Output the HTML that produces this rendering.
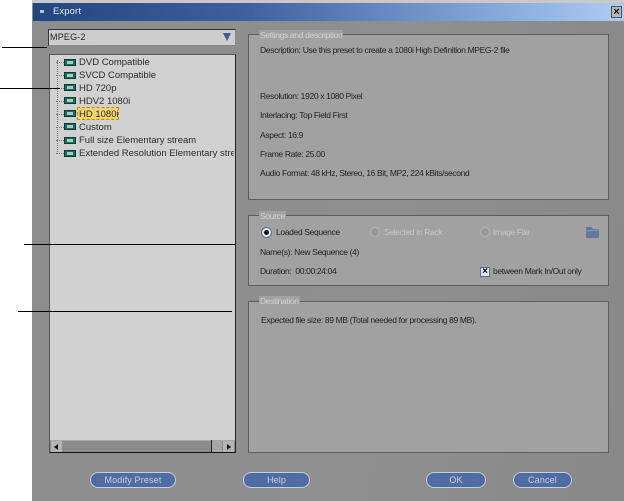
<!DOCTYPE html>
<html><head><meta charset="utf-8">
<style>
html,body{margin:0;padding:0;background:#fff;}
#r{position:relative;width:624px;height:501px;overflow:hidden;background:#fff;font-family:"Liberation Sans",sans-serif;font-size:8.5px;color:#222;filter:blur(.25px);}
#r div,#r span.a{position:absolute;white-space:nowrap;box-sizing:border-box;}
.t{line-height:11px;height:11px;letter-spacing:-.35px;}
.g{border:1px solid #5e5e5e;background:#a1a1a1;}
.lg{color:#d2d2d2;background:#a1a1a1;padding:0 1px;line-height:10px;height:10px;letter-spacing:-.35px;}
.b{background:#4f6ca3;border:1px solid #c3cfe3;border-radius:8px;color:#c6d0e2;text-align:center;line-height:14px;height:16px;font-size:9px;letter-spacing:.15px;top:472px;}
.l{background:#000;height:1px;}
.i{font-size:9.5px;color:#2a2a2a;left:79px;line-height:12px;height:12px;}
.f{left:64px;width:12px;height:7px;background:#1f6a60;border:1px solid #0e3a36;}
.f:after{content:"";position:absolute;left:2px;top:1px;width:6px;height:3px;background:#9fd0c4;}
.h{left:56px;width:8px;height:0;border-top:1px dotted #777;}
</style></head><body>
<div id="r">
<div style="left:32px;top:0;width:592px;height:501px;background:linear-gradient(100deg,#8d8d8d,#8f8f8f 60%,#888);"></div>
<div style="left:32px;top:0;width:592px;height:3px;background:#c9c9c9;"></div>
<div style="left:33px;top:3px;width:591px;height:18px;background:linear-gradient(90deg,#23467f,#3d5f9c 35%,#779bd0 70%,#acccf2);"></div>
<div style="left:40px;top:10px;width:4px;height:3px;background:#b9c4d8;"></div>
<div class="t" style="left:53px;top:6px;color:#e4e9f2;font-size:9.5px;letter-spacing:.1px;">Export</div>
<div style="left:611px;top:6px;width:11px;height:12px;background:#b5b5b5;border:1px solid #555;color:#000;font-weight:bold;font-size:11px;line-height:10px;text-align:center;">×</div>

<div style="left:48px;top:29px;width:188px;height:17px;background:#cdcdcd;border:1px solid #333;border-right-color:#888;border-bottom-color:#888;"></div>
<div class="t" style="left:50px;top:32px;font-size:9px;letter-spacing:.2px;">MPEG-2</div>
<div style="left:223px;top:33px;width:0;height:0;border-left:4px solid transparent;border-right:4px solid transparent;border-top:8px solid #47598a;"></div>

<div style="left:49px;top:54px;width:187px;height:399px;background:#d1d1d1;border:1px solid #555;border-right-color:#222;border-bottom:1px solid #111;"></div>
<div style="left:57px;top:60px;height:94px;width:0;border-left:1px dotted #777;"></div>
<div class="h" style="top:62px;"></div><div class="h" style="top:75px;"></div><div class="h" style="top:88px;"></div><div class="h" style="top:101px;"></div><div class="h" style="top:114px;"></div><div class="h" style="top:127px;"></div><div class="h" style="top:140px;"></div><div class="h" style="top:153px;"></div>
<div class="f" style="top:59px;"></div><div class="f" style="top:72px;"></div><div class="f" style="top:84px;"></div><div class="f" style="top:97px;"></div><div class="f" style="top:110px;"></div><div class="f" style="top:123px;"></div><div class="f" style="top:137px;"></div><div class="f" style="top:150px;"></div>
<div class="i" style="top:57px;">DVD Compatible</div>
<div class="i" style="top:70px;">SVCD Compatible</div>
<div class="i" style="top:83px;">HD 720p</div>
<div class="i" style="top:96px;">HDV2 1080i</div>
<div style="left:77px;top:107px;width:42px;height:13px;background:#f4d36c;border:1px dashed #b08a20;"></div>
<div class="i" style="top:109px;">HD 1080i</div>
<div class="i" style="top:122px;">Custom</div>
<div class="i" style="top:135px;">Full size Elementary stream</div>
<div class="i" style="top:148px;width:155px;overflow:hidden;">Extended Resolution Elementary stream</div>

<div style="left:50px;top:440px;width:185px;height:12px;background:#8c8c8c;border-top:1px solid #a8a8a8;"></div>
<div style="left:51px;top:441px;width:11px;height:11px;background:#b4b4b4;"></div>
<div style="left:54px;top:444px;width:0;height:0;border-top:3px solid transparent;border-bottom:3px solid transparent;border-right:4px solid #111;"></div>
<div style="left:211px;top:440px;width:11px;height:12px;background:repeating-linear-gradient(45deg,#b0b0b0 0 1px,#9a9a9a 1px 2px);border-left:1px solid #222;"></div>
<div style="left:223px;top:441px;width:11px;height:11px;background:#b4b4b4;"></div>
<div style="left:227px;top:444px;width:0;height:0;border-top:3px solid transparent;border-bottom:3px solid transparent;border-left:4px solid #111;"></div>

<div class="g" style="left:248px;top:34px;width:361px;height:166px;"></div>
<div class="lg" style="left:259px;top:30px;">Settings and description</div>
<div class="t" style="left:260px;top:45px;">Description: Use this preset to create a 1080i High Definition MPEG-2 file</div>
<div class="t" style="left:260px;top:91px;">Resolution: 1920 x 1080 Pixel</div>
<div class="t" style="left:260px;top:110px;">Interlacing: Top Field First</div>
<div class="t" style="left:260px;top:130px;">Aspect: 16:9</div>
<div class="t" style="left:260px;top:149px;">Frame Rate: 25.00</div>
<div class="t" style="left:260px;top:168px;">Audio Format: 48 kHz, Stereo, 16 Bit, MP2, 224 kBits/second</div>

<div class="g" style="left:248px;top:215px;width:361px;height:71px;"></div>
<div class="lg" style="left:259px;top:211px;">Source</div>
<div style="left:261px;top:227px;width:11px;height:11px;border-radius:50%;background:#e8ecf4;border:1px solid #4f6ca3;"></div>
<div style="left:264px;top:230px;width:5px;height:5px;border-radius:50%;background:#111;"></div>
<div class="t" style="left:276px;top:227px;">Loaded Sequence</div>
<div style="left:370px;top:227px;width:10px;height:10px;border-radius:50%;background:#999;border:1px solid #b5b5b5;"></div>
<div class="t" style="left:384px;top:227px;color:#c8c8c8;">Selected in Rack</div>
<div style="left:480px;top:227px;width:10px;height:10px;border-radius:50%;background:#999;border:1px solid #b5b5b5;"></div>
<div class="t" style="left:493px;top:227px;color:#c8c8c8;">Image File</div>
<svg style="position:absolute;left:585px;top:225px;" width="15" height="14" viewBox="0 0 15 14"><path d="M1 3 L1 12 Q1 13 2 13 L13 13 Q14 13 14 12 L14 4 L8 4 L6.5 2 L2 2 Q1 2 1 3 Z" fill="#66779e"/><path d="M1 6 L14 5" stroke="#8a99b8" stroke-width="1" fill="none"/></svg>
<div class="t" style="left:260px;top:247px;">Name(s): New Sequence (4)</div>
<div class="t" style="left:260px;top:266px;">Duration:&nbsp; 00:00:24:04</div>
<div style="left:480px;top:267px;width:10px;height:10px;background:#e8ecf4;border:1px solid #4f6ca3;color:#000;font-weight:bold;font-size:10px;line-height:8px;text-align:center;">×</div>
<div class="t" style="left:493px;top:266px;">between Mark In/Out only</div>

<div class="g" style="left:248px;top:301px;width:361px;height:152px;"></div>
<div class="lg" style="left:259px;top:296px;color:#d0d0d0;">Destination</div>
<div class="t" style="left:261px;top:315px;">Expected file size: 89 MB (Total needed for processing 89 MB).</div>

<div class="b" style="left:90px;width:86px;">Modify Preset</div>
<div class="b" style="left:243px;width:67px;">Help</div>
<div class="b" style="left:426px;width:60px;">OK</div>
<div class="b" style="left:513px;width:59px;">Cancel</div>

<div class="l" style="left:2px;top:47px;width:45px;"></div>
<div class="l" style="left:0;top:88px;width:60px;"></div>
<div class="l" style="left:24px;top:244px;width:211px;"></div>
<div class="l" style="left:18px;top:311px;width:214px;"></div>
</div>
</body></html>
